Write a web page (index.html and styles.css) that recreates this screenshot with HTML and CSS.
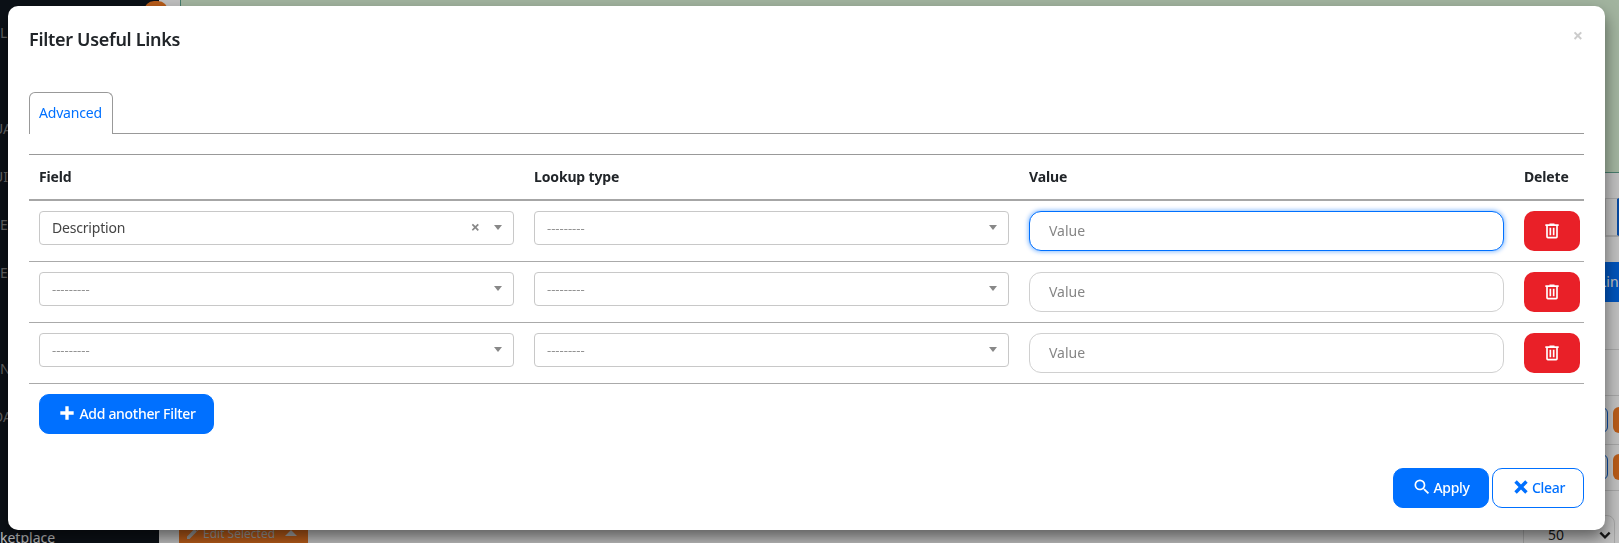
FILE: index.html
```html
<!DOCTYPE html>
<html lang="en">
<head>
<meta charset="utf-8">
<title>Filter Useful Links</title>
<link rel="stylesheet" href="styles.css">
</head>
<body>
<div class="page">
  <aside class="sidebar">
    <div class="nav-item">L</div>
    <div class="nav-item"></div>
    <div class="nav-item nav-shift">UA</div>
    <div class="nav-item nav-shift">UI</div>
    <div class="nav-item">E</div>
    <div class="nav-item">E</div>
    <div class="nav-item"></div>
    <div class="nav-item">N</div>
    <div class="nav-item nav-shift">DA</div>
    <div class="nav-item"></div>
    <div class="nav-item"></div>
    <div class="nav-item nav-last">ketplace</div>
    <span class="side-badge"></span>
  </aside>
  <main class="content">
    <div class="banner"></div>
    <div class="strip strip-a"><span class="strip-box"></span></div>
    <div class="strip strip-b"><span class="strip-blue">Link</span></div>
    <div class="strip strip-c"></div>
    <div class="strip strip-d"><span class="mini-outline"></span><span class="mini-orange"></span></div>
    <div class="strip strip-d strip-e"><span class="mini-outline"></span><span class="mini-orange"></span></div>
    <div class="bottom-row">
      <span class="edit-btn">
        <svg class="edit-icon" viewBox="0 0 24 24"><path d="M20.71,7.04C21.1,6.65 21.1,6 20.71,5.63L18.37,3.29C18,2.9 17.35,2.9 16.96,3.29L15.12,5.12L18.87,8.87M3,17.25V21H6.75L17.81,9.93L14.06,6.18L3,17.25Z"/></svg>
        Edit Selected
        <span class="edit-caret"></span>
      </span>
      <span class="per-page">50<svg class="per-chevron" viewBox="0 0 12 12"><path d="M2 4l4 4 4-4"/></svg></span>
    </div>
  </main>
</div>
<div class="backdrop"></div>
<section class="modal">
  <header class="modal-head">
    <h1 class="modal-title">Filter Useful Links</h1>
    <span class="modal-close">×</span>
  </header>
  <nav class="tabs"><a class="tab">Advanced</a></nav>
  <table class="filters">
    <thead>
      <tr><th>Field</th><th>Lookup type</th><th>Value</th><th>Delete</th></tr>
    </thead>
    <tbody>
      <tr>
        <td><div class="select"><span class="sel-text">Description</span><span class="sel-clear">×</span><span class="sel-arrow"></span></div></td>
        <td><div class="select"><span class="sel-text sel-empty">---------</span><span class="sel-arrow"></span></div></td>
        <td><input class="value-input is-focus" placeholder="Value"></td>
        <td><button class="del-btn"><svg class="icon-trash" viewBox="0 0 24 24"><path d="M9,3V4H4V6H5V19A2,2 0 0,0 7,21H17A2,2 0 0,0 19,19V6H20V4H15V3H9M7,6H17V19H7V6M9,8V17H11V8H9M13,8V17H15V8H13Z"/></svg></button></td>
      </tr>
      <tr>
        <td><div class="select"><span class="sel-text sel-empty">---------</span><span class="sel-arrow"></span></div></td>
        <td><div class="select"><span class="sel-text sel-empty">---------</span><span class="sel-arrow"></span></div></td>
        <td><input class="value-input" placeholder="Value"></td>
        <td><button class="del-btn"><svg class="icon-trash" viewBox="0 0 24 24"><path d="M9,3V4H4V6H5V19A2,2 0 0,0 7,21H17A2,2 0 0,0 19,19V6H20V4H15V3H9M7,6H17V19H7V6M9,8V17H11V8H9M13,8V17H15V8H13Z"/></svg></button></td>
      </tr>
      <tr>
        <td><div class="select"><span class="sel-text sel-empty">---------</span><span class="sel-arrow"></span></div></td>
        <td><div class="select"><span class="sel-text sel-empty">---------</span><span class="sel-arrow"></span></div></td>
        <td><input class="value-input" placeholder="Value"></td>
        <td><button class="del-btn"><svg class="icon-trash" viewBox="0 0 24 24"><path d="M9,3V4H4V6H5V19A2,2 0 0,0 7,21H17A2,2 0 0,0 19,19V6H20V4H15V3H9M7,6H17V19H7V6M9,8V17H11V8H9M13,8V17H15V8H13Z"/></svg></button></td>
      </tr>
    </tbody>
  </table>
  <div class="add-row">
    <button class="btn btn-primary btn-add"><svg class="btn-icon" viewBox="0 0 24 24"><path d="M20 14H14V20H10V14H4V10H10V4H14V10H20V14Z"/></svg>Add another Filter</button>
  </div>
  <footer class="modal-foot">
    <button class="btn btn-primary btn-apply"><svg class="btn-icon" viewBox="0 0 24 24"><path d="M9.5,3A6.5,6.5 0 0,1 16,9.5C16,11.11 15.41,12.59 14.44,13.73L14.71,14H15.5L20.5,19L19,20.5L14,15.5V14.71L13.73,14.44C12.59,15.41 11.11,16 9.5,16A6.5,6.5 0 0,1 3,9.5A6.5,6.5 0 0,1 9.5,3M9.5,5C7,5 5,7 5,9.5C5,12 7,14 9.5,14C12,14 14,12 14,9.5C14,7 12,5 9.5,5Z"/></svg>Apply</button>
    <button class="btn btn-outline btn-clear"><svg class="btn-icon" viewBox="0 0 24 24"><path d="M20 6.91L17.09 4L12 9.09L6.91 4L4 6.91L9.09 12L4 17.09L6.91 20L12 14.91L17.09 20L20 17.09L14.91 12L20 6.91Z"/></svg>Clear</button>
  </footer>
</section>
</body>
</html>
```

FILE: styles.css
```css
* { box-sizing: border-box; }
html, body { margin: 0; height: 100%; overflow: hidden; }
body { font-family: "Noto Sans", "Open Sans", sans-serif; font-size: 14px; color: #212529; background: #fff; }

.page { display: flex; height: 543px; overflow: hidden; }
.sidebar { width: 159px; flex: none; background: #11171f; color: #8a8a8a; padding-top: 9px; font-size: 14px; position: relative; }
.nav-item { height: 48px; line-height: 48px; white-space: nowrap; }
.nav-shift { margin-left: -7px; }
.nav-last { color: #fff; margin-top: -6px; line-height: 14px; height: 14px; }
.side-badge { position: absolute; left: 144px; top: 1px; width: 24px; height: 20px; border-radius: 10px; background: #f47a22; }

.content { flex: 1; min-width: 0; display: flex; flex-direction: column; background: #fff; }
.banner { height: 173px; flex: none; margin-left: 21px; background: #d9f1d5; border-left: 1px solid #5fa690; border-bottom: 1px solid #5fa690; }
.strip { display: flex; justify-content: flex-end; align-items: stretch; flex: none; }
.strip-a { height: 64px; padding-top: 25px; border-bottom: 1px solid #ddd; }
.strip-box { width: 14px; border: 1px solid #ddd; border-right: 2px solid #0b62d6; }
.strip-b { height: 40px; margin-top: 25px; }
.strip-blue { width: 200px; padding-left: 180px; background: #006ff9; color: #fff; font-size: 14px; line-height: 40px; white-space: nowrap; overflow: hidden; }
.strip-c { height: 48px; border-bottom: 1px solid #ddd; }
.strip-d { height: 49px; margin-top: 45px; padding: 11px 0; border-top: 1px solid #ddd; gap: 5px; }
.strip-e { height: 47px; margin-top: 0; padding: 9px 0 10px; border-bottom: 1px solid #ddd; }
.mini-outline { width: 40px; border: 1px solid #0b62d6; border-radius: 6px; }
.mini-orange { width: 6px; background: #f47a22; border-radius: 6px 0 0 6px; }
.bottom-row { position: absolute; left: 179px; right: 0; top: 519px; display: flex; justify-content: space-between; }
.edit-btn { display: flex; align-items: center; gap: 2px; width: 129px; height: 28px; padding: 0 6px; background: #f47a22; color: #ccc; font-size: 12px; white-space: nowrap; }
.edit-icon { width: 16px; height: 16px; fill: #ccc; }
.edit-caret { margin-left: 8px; border-left: 6px solid transparent; border-right: 6px solid transparent; border-bottom: 6px solid #ddd; }
.per-page { display: flex; justify-content: space-between; width: 92px; height: 40px; margin-top: -4px; margin-right: 4px; padding: 10px 2px 0 24px; border: 1px solid #ddd; border-radius: 8px; color: #222; font-size: 14px; line-height: 18px; background: #fff; }
.per-chevron { width: 14px; height: 14px; fill: none; stroke: #222; stroke-width: 2; margin-top: 2px; }

.backdrop { position: fixed; inset: 0; background: rgba(0, 0, 0, .25); }
.modal { position: fixed; left: 8px; top: 6px; width: 1597px; height: 524px; padding: 0 21px; background: #fff; border-radius: 10px; box-shadow: 0 8px 16px rgba(0, 0, 0, .5); }
.modal-head { display: flex; justify-content: space-between; align-items: flex-start; height: 86px; padding-top: 21px; }
.modal-title { margin: 0; font-size: 18px; line-height: 24px; font-weight: 600; letter-spacing: -.3px; color: #212529; }
.modal-close { font-size: 18px; font-weight: 700; line-height: 18px; color: #ccc; margin-right: 1px; margin-top: -1px; }

.tabs { display: flex; height: 42px; border-bottom: 1px solid #999; }
.tab { display: block; height: 42px; padding: 0 10px 0 9px; line-height: 39px; color: #0070ff; font-size: 14px; letter-spacing: -.2px; background: #fff; border: 1px solid #999; border-bottom: 0; border-radius: 6px 6px 0 0; }

.filters { width: 100%; margin-top: 20px; table-layout: fixed; border-collapse: separate; border-spacing: 0; }
.filters th:nth-child(-n+3), .filters td:nth-child(-n+3) { width: 495px; }
.filters th { text-align: left; padding: 0 10px 2px; height: 47px; font-size: 14px; font-weight: 700; letter-spacing: -.15px; color: #212529; border-top: 1px solid #999; border-bottom: 2px solid #a6a6a6; }
.filters td { padding: 10px; border-bottom: 1px solid #aaa; vertical-align: top; height: 61px; }
.filters td:last-child { padding-right: 4px; }

.select { display: flex; align-items: center; height: 34px; padding: 0 11px 2px 12px; border: 1px solid #c8c8c8; border-radius: 4px; background: #fff; }
.sel-text { flex: 1; color: #444; font-size: 14px; letter-spacing: -.2px; }
.sel-empty { color: #939393; font-size: 13px; letter-spacing: 0; padding-top: 2px; }
.sel-clear { color: #888; font-weight: 700; font-size: 16px; margin-right: 14px; line-height: 1; }
.sel-arrow { width: 0; height: 0; border-left: 4.5px solid transparent; border-right: 4.5px solid transparent; border-top: 5px solid #888; }

.value-input { display: block; width: 100%; height: 40px; padding: 0 19px 2px; border: 1px solid #d0d0d0; border-radius: 12px; font: inherit; font-size: 14px; color: #444; outline: 0; background: #fff; }
.value-input::placeholder { color: #868686; opacity: 1; }
.is-focus { border-color: #0070ff; box-shadow: 0 0 4px 1px rgba(0, 112, 255, .45); }

.del-btn { display: flex; align-items: center; justify-content: center; width: 56px; height: 40px; padding: 0; border: 0; border-radius: 10px; background: #e92028; }
.icon-trash { width: 20px; height: 20px; fill: #fff; }

.add-row { margin-top: 10px; padding-left: 10px; }
.btn { display: inline-flex; align-items: center; justify-content: center; height: 40px; padding: 0 0 2px; border: 1px solid #0070ff; border-radius: 10px; font-family: inherit; font-size: 14px; font-weight: 500; letter-spacing: -.3px; gap: 1px; white-space: nowrap; }
.btn-primary { background: #0070ff; color: #fff; }
.btn-outline { background: #fff; color: #0070ff; }
.btn-icon { width: 20px; height: 20px; fill: currentColor; }
.btn-add { width: 175px; gap: 2px; }
.btn-apply { width: 96px; }
.btn-clear { width: 92px; }
.modal-foot { display: flex; justify-content: flex-end; gap: 3px; margin-top: 34px; }
```
